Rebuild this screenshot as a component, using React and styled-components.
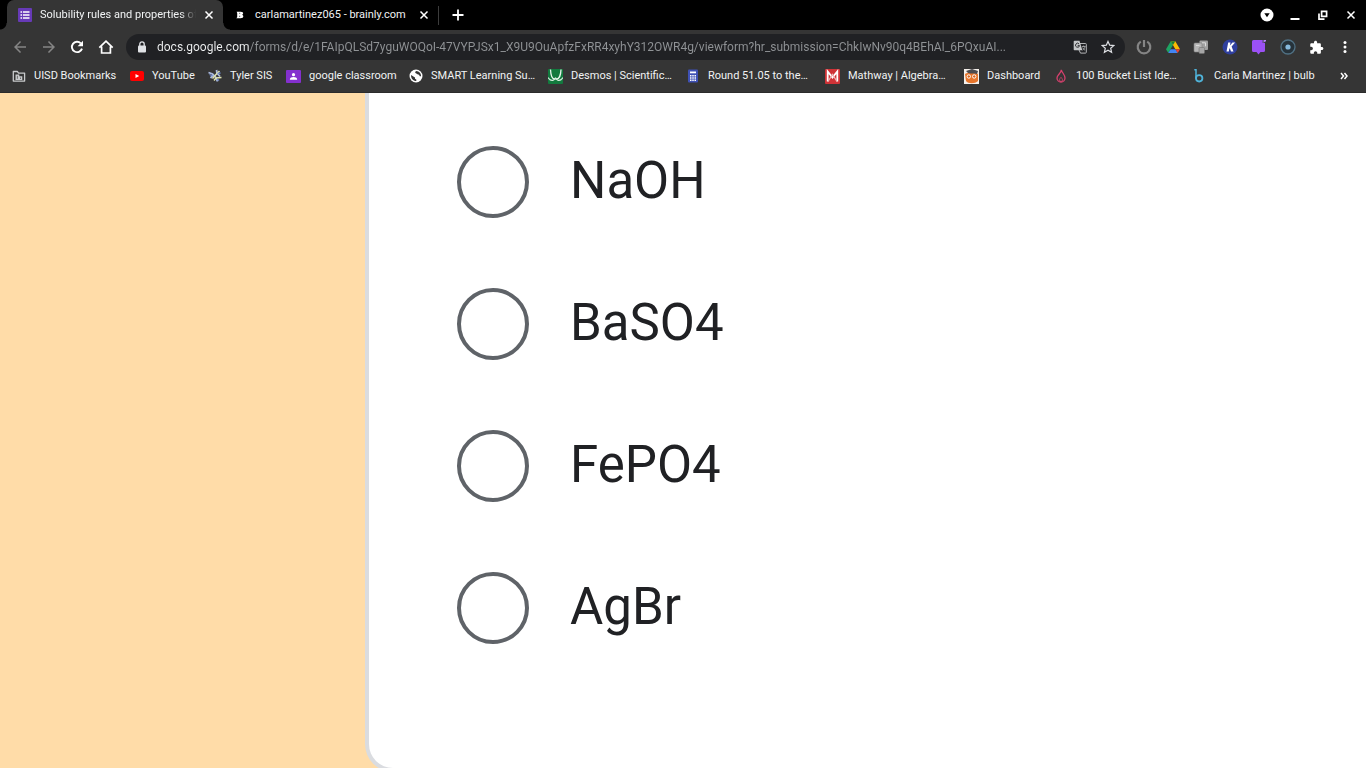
import React, { useState } from 'react';
import styled, { createGlobalStyle } from 'styled-components';

const GlobalStyle = createGlobalStyle`
  * {
    box-sizing: border-box;
  }

  body {
    margin: 0;
    font-family: Roboto, "Liberation Sans", sans-serif;
    background: #ffdca8;
    overflow: hidden;
  }
`

const Window = styled.div`
  display: flex;
  flex-direction: column;
  height: 100vh;
`

const TabStrip = styled.header`
  display: flex;
  align-items: center;
  height: 30px;
  padding: 0 1px 0 7px;
  background: #000;
`

const Tab = styled.div`
  position: relative;
  display: flex;
  align-items: center;
  width: ${props => props.$active ? 216 : 215}px;
  height: 30px;
  padding: 0 8px 0 ${props => props.$active ? 10 : 9}px;
  gap: 7px;
  border-radius: 7px 7px 0 0;
  background: ${props => props.$active ? '#353535' : '#000'};

  &::before, &::after {
    content: '';
    display: ${props => props.$active ? 'block' : 'none'};
    position: absolute;
    bottom: 0;
    width: 7px;
    height: 7px;
  }

  &::before {
    left: -7px;
    background: radial-gradient(circle at 0 0, #000 6px, #353535 7px);
  }

  &::after {
    right: -7px;
    z-index: 1;
    background: radial-gradient(circle at 100% 0, #000 6px, #353535 7px);
  }
`

const Favicon = styled.span`
  display: flex;
  flex: none;
  align-items: center;
  justify-content: center;
  width: 16px;
`

const TabTitle = styled.span`
  flex: 1;
  min-width: 0;
  white-space: nowrap;
  font-size: 11px;
  line-height: 16px;
  color: #f1f3f4;
  ${props => props.$fade && 'mask-image: linear-gradient(to right, #000 90%, transparent);'}
`

const IconButton = styled.button`
  display: flex;
  flex: none;
  align-items: center;
  justify-content: center;
  width: ${props => props.$width || 28}px;
  height: 24px;
  padding: 0;
  border: 0;
  background: none;
  color: ${props => props.$dim ? '#858585' : '#fff'};
`

const Separator = styled.span`
  width: 1px;
  height: 19px;
  background: #3c3c3c;
`

const WindowControls = styled.div`
  display: flex;
  margin-left: auto;
`

const Toolbar = styled.div`
  display: flex;
  align-items: center;
  height: 34px;
  padding: 0 7px 0 6px;
  background: #353535;
`

const ButtonGroup = styled.div`
  display: flex;
  flex: none;
  justify-content: space-between;
  width: ${props => props.$width}px;
`

const Omnibox = styled.div`
  display: flex;
  flex: 1;
  align-items: center;
  min-width: 0;
  height: 26px;
  margin: 0 5px 0 6px;
  padding: 0 3px 0 9px;
  border-radius: 13px;
  background: #202124;
`

// The host is brighter than the path, so the text is filled from a two-step gradient.
const Address = styled.input`
  flex: 1;
  min-width: 0;
  margin: 0 8px;
  padding: 0;
  border: 0;
  outline: 0;
  font-family: inherit;
  font-size: 12px;
  line-height: 18px;
  text-overflow: ellipsis;
  background: linear-gradient(to right, #f1f3f4 92px, #909396 92px);
  background-clip: text;
  -webkit-text-fill-color: transparent;
`

const Bookmarks = styled.nav`
  display: flex;
  align-items: center;
  height: 29px;
  padding: 0 14px 4px 12px;
  border-bottom: 1px solid #2b2b2b;
  background: #353535;
`

const Bookmark = styled.a`
  display: flex;
  flex: none;
  align-items: center;
  gap: 8px;
  width: ${props => props.$width}px;
  font-size: 11px;
  line-height: 16px;
  white-space: nowrap;
  text-decoration: none;
  color: #f1f3f4;
`

const More = styled(IconButton)`
  margin-left: auto;
`

const Page = styled.main`
  display: grid;
  flex: 1;
  grid-template-columns: 365px 1fr;
  min-height: 0;
`

const Card = styled.form`
  grid-column: 2;
  height: calc(100% + 4px);
  padding: 53px 88px;
  border: 4px solid #dadce0;
  border-width: 0 0 4px 4px;
  border-radius: 0 0 0 28px;
  background: #fff;
`

const Options = styled.fieldset`
  display: flex;
  flex-direction: column;
  gap: 70px;
  margin: 0;
  padding: 0;
  border: 0;
`

const Option = styled.label`
  display: flex;
  align-items: center;
  gap: 41px;
  height: 72px;
  font-size: 51px;
  line-height: 68px;
  color: #202124;
`

const Radio = styled.input`
  appearance: none;
  flex: none;
  width: 72px;
  height: 72px;
  margin: 0;
  border: 4px solid #5f6368;
  border-radius: 50%;

  &:checked {
    background: radial-gradient(circle, #673ab7 18px, transparent 19px);
    border-color: #673ab7;
  }
`

const OptionText = styled.span`
  padding-bottom: 2px;
`

const Svg = ({ size = 16, box = 16, children }) => (
  <svg width={size} height={size} viewBox={`0 0 ${box} ${box}`} fill="none" aria-hidden="true">
    {children}
  </svg>
)

const CloseIcon = () => (
  <Svg size={10} box={10}>
    <path d="M1.500 1.500l7 7M8.500 1.500l-7 7" stroke="currentColor" strokeWidth="1.500" />
  </Svg>
)

const FormsIcon = () => (
  <Svg size={14} box={14}>
    <rect width="14" height="14" rx="1" fill="#673ab7" />
    <path d="M5 4h6.500M5 7h6.500M5 10h6.500" stroke="#fff" strokeWidth="1.600" />
    <path d="M2.500 4h1.600M2.500 7h1.600M2.500 10h1.600" stroke="#fff" strokeWidth="1.600" />
  </Svg>
)

const BrainlyIcon = () => (
  <Svg size={8} box={8}>
    <path d="M.6.8h4.200c2.800 0 2.900 2.200 1.400 2.900C8.100 4.500 7.600 7.300 4.600 7.300H.3l.9-1.100V2.100z" fill="#fff" />
    <path d="M3.200 2.300h1M3.100 5.300h1.100" stroke="#333" strokeWidth=".9" />
  </Svg>
)

const BackIcon = () => (
  <Svg box={24} size={18}>
    <path fill="currentColor" d="M20 11H7.830l5.590-5.590L12 4l-8 8 8 8 1.410-1.410L7.830 13H20v-2z" />
  </Svg>
)

const ForwardIcon = () => (
  <Svg box={24} size={18}>
    <path fill="currentColor" d="M12 4l-1.410 1.410L16.170 11H4v2h12.170l-5.580 5.590L12 20l8-8z" />
  </Svg>
)

const ReloadIcon = () => (
  <Svg>
    <path d="M13 9.600A5.200 5.200 0 1 1 11.800 4.300" stroke="currentColor" strokeWidth="1.900" />
    <path d="M14 1.800v5.400H8.600z" fill="currentColor" />
  </Svg>
)

const HomeIcon = () => (
  <Svg>
    <path d="M1.300 8.600L8 2.200l6.700 6.400M3.600 7.500V14h8.800V7.500" stroke="currentColor" strokeWidth="1.700" />
  </Svg>
)

const LockIcon = () => (
  <Svg size={14} box={14}>
    <rect x="3" y="5.500" width="8" height="7" rx="1" fill="#dfe1e5" />
    <path d="M4.800 6V4a2.200 2.200 0 0 1 4.400 0v2" stroke="#dfe1e5" strokeWidth="1.300" />
  </Svg>
)

const TranslateIcon = () => (
  <Svg size={14} box={14}>
    <path d="M6 3.500h6.500a.8.8 0 0 1 .8.800v8a.8.8 0 0 1-.8.800H7.500L6 10" stroke="#b4b6b8" strokeWidth="1" />
    <path d="M1.500.7h5l2.800 9.600H1.500a.8.8 0 0 1-.8-.8v-8a.8.8 0 0 1 .8-.8z" fill="#c4c6c8" />
    <path d="M6 3.900a2 2 0 1 0 .5 1.700H4.700" stroke="#303134" strokeWidth="1" />
    <path d="M8.900 6.500h3.600M10.700 5.500v1M12 6.500c-.3 1.700-1.300 2.900-2.400 3.700M9.700 7.600c.5 1.200 1.400 2.100 2.400 2.700" stroke="#b4b6b8" strokeWidth=".8" />
  </Svg>
)

const StarIcon = () => (
  <Svg size={14} box={14}>
    <path d="M7 1.400l1.700 3.800 4.100.4-3.100 2.700.9 4L7 10.200l-3.600 2.100.9-4-3.100-2.700 4.100-.4z" stroke="#dfe1e5" strokeWidth="1.200" />
  </Svg>
)

const PowerIcon = () => (
  <Svg>
    <path d="M4.800 2.600a6.300 6.300 0 1 0 6.400 0" stroke="#858585" strokeWidth="2.200" />
    <path d="M8 1v7" stroke="#858585" strokeWidth="2.200" />
  </Svg>
)

const DriveIcon = () => (
  <Svg size={14} box={14}>
    <path d="M4.700 1.200L7 5.100 2.300 13 0 9.200z" fill="#1ea362" />
    <path d="M4.700 1.200h4.600L14 9.200H9.400z" fill="#fbbc04" />
    <path d="M4.600 9.200h4.800L11.700 13H2.300z" fill="#4285f4" />
    <path d="M9.400 9.200H14L11.700 13z" fill="#ea4335" />
    <path d="M4.700 1.200h4.600L7 5.100z" fill="#188038" />
  </Svg>
)

const CopiesIcon = () => (
  <Svg>
    <rect x="6.500" y="1.500" width="8.500" height="9.500" rx="1" fill="#a0a0a0" />
    <rect x="1" y="4" width="8" height="9" rx="1" fill="#b6b6b6" stroke="#808080" strokeWidth=".6" />
    <rect x="6" y="8.500" width="5.500" height="6" rx="1" fill="#a5a5a5" stroke="#6f6f6f" strokeWidth=".6" />
    <path d="M9 3.800h3.500v3.500M3 6.500h3.500" stroke="#dadada" />
  </Svg>
)

const KamiIcon = () => (
  <Svg>
    <circle cx="8" cy="8" r="7.500" fill="#2f3f9e" />
    <path d="M6.200 3.600h2.300l-.6 3 2.600-3h2.600L9.600 7.500l1.900 4.900H9L7.800 9.300l-.5.500-.5 2.600H4.500z" fill="#fff" />
  </Svg>
)

const PurpleIcon = () => (
  <Svg>
    <path d="M2.500 1h9.200v3H14v7.500a1.500 1.500 0 0 1-1.500 1.500H9.500L7.500 15.500l-2-2.500h-3A1.500 1.500 0 0 1 1 11.500v-9A1.500 1.500 0 0 1 2.500 1z" fill="#9b51f5" />
    <path d="M12.500 1H15v1.500h-1L12.500 4z" fill="#b784fb" />
  </Svg>
)

const TargetIcon = () => (
  <Svg>
    <circle cx="8" cy="8" r="7" stroke="#507184" strokeWidth="1.300" fill="#26323a" />
    <circle cx="8" cy="8" r="2.600" fill="#86b9dc" />
  </Svg>
)

const PuzzleIcon = () => (
  <Svg box={24} size={15}>
    <path fill="currentColor" d="M20.500 11H19V7c0-1.100-.9-2-2-2h-4V3.500C13 2.120 11.880 1 10.500 1S8 2.120 8 3.500V5H4c-1.100 0-1.990.9-1.990 2v3.800H3.500c1.490 0 2.700 1.210 2.700 2.700s-1.210 2.700-2.700 2.700H2V20c0 1.100.9 2 2 2h3.800v-1.500c0-1.490 1.210-2.700 2.700-2.700 1.490 0 2.700 1.210 2.700 2.700V22H17c1.100 0 2-.9 2-2v-4h1.500c1.380 0 2.500-1.120 2.500-2.500S21.880 11 20.500 11z" />
  </Svg>
)

const DotsIcon = () => (
  <Svg>
    <circle cx="8" cy="3.500" r="1.500" fill="currentColor" />
    <circle cx="8" cy="8" r="1.500" fill="currentColor" />
    <circle cx="8" cy="12.500" r="1.500" fill="currentColor" />
  </Svg>
)

const FolderIcon = () => (
  <Svg size={14} box={14}>
    <path d="M1.300 2.500h4l1.300 1.600h6v8H1.300z" stroke="#c8cacc" strokeWidth="1.300" strokeLinejoin="round" />
    <path d="M3.500 5.500h3.800v1.800h3V11H3.500z" fill="#c8cacc" />
    <path d="M5.400 6.800v3M8.500 8.500V10" stroke="#555" strokeWidth=".8" />
  </Svg>
)

const YoutubeIcon = () => (
  <Svg size={14} box={14}>
    <rect y="2" width="14" height="10" rx="2" fill="#f00" />
    <path d="M5.500 4.900v4.200L9.200 7z" fill="#fff" />
  </Svg>
)

const TylerIcon = () => (
  <Svg size={14} box={14}>
    <path d="M.5 3.500l4 1.500 3 3 2 4.500M2.500 9l3-3M8.500 1l.5 3 3 3.500" stroke="#aab9de" strokeWidth="1.800" />
    <path d="M4.500 9.500L8 5.500 11.500 2M6 11.500l2-2.500 5.500-.5" stroke="#dfe3b0" strokeWidth="1.500" />
    <path d="M1.500 5.500l3 1.500M9.500 4.500l3-.5M9 10l2 1.500" stroke="#6f8acb" strokeWidth="1.300" />
  </Svg>
)

const ClassroomIcon = () => (
  <Svg size={15} box={15}>
    <rect width="15" height="13" y="1" rx="1" fill="#8430ce" />
    <circle cx="7.500" cy="5.700" r="1.600" fill="#fff" />
    <path d="M3.900 10.200c0-3 7.200-3 7.200 0v.5H3.900z" fill="#fff" />
  </Svg>
)

const GlobeIcon = () => (
  <Svg size={14} box={14}>
    <circle cx="7" cy="7" r="6.500" fill="#fff" />
    <path d="M2 6l4 2.500v1.300l1.300.8v1.500C4 12 2 9.500 2 6zM7.500 2c-1.500.3-1.700 1.600-.7 2.200 1.600.6 1.800 1.500 3.200 1.500l.8 1.600h1.300C12 4 10 2.300 7.500 2z" fill="#353535" />
  </Svg>
)

const DesmosIcon = () => (
  <Svg size={15} box={15}>
    <rect width="15" height="15" rx="1" fill="#127a3e" />
    <path d="M2.500.5c.3 6 2 9.500 4 9.500 1 0 1-1.500 1-1.500s.2 1.500 1.300 1.500c2.200 0 4-4 4.200-9.500" stroke="#e7f5ec" strokeWidth="1.300" />
    <path d="M0 8.500c2 3 3.500 3.700 5.500 2.500l2-1.500 2 1.500c2 1.200 3.500.5 5.500-2.500" stroke="#d3ecdc" strokeWidth="1.200" />
  </Svg>
)

const CalculatorIcon = () => (
  <Svg size={14} box={14}>
    <rect x="2" y=".5" width="10" height="13" rx="1" fill="#3f51b5" />
    <path d="M4 3.400h6" stroke="#fff" strokeWidth="1.800" />
    <path d="M4 6.700h6M4 9h6M4 11.300h6" stroke="#fff" strokeWidth="1.400" strokeDasharray="1.500 .75" />
  </Svg>
)

const MathwayIcon = () => (
  <Svg size={15} box={15}>
    <rect width="15" height="15" rx="1" fill="#cf3337" />
    <path d="M2.700 12.500v-10l4.800 6 4.800-6v10" stroke="#fff" strokeWidth="1.800" />
    <path d="M3 12.500l4.500-7 4.500 7" stroke="#f0b4b5" strokeWidth="1.300" />
  </Svg>
)

const OwlIcon = () => (
  <Svg size={15} box={15}>
    <rect width="15" height="15" fill="#f6f1ec" />
    <path d="M1 5c3-2 10-2 13 0v7c-3 3-10 3-12 0z" fill="#e8762c" />
    <path d="M2 2l6-2 6 2-1 3c-3-1-6 0-9-1z" fill="#4c4c50" />
    <circle cx="4.800" cy="7.500" r="1.700" stroke="#fff" fill="#d9641c" />
    <circle cx="10.200" cy="7.500" r="1.700" stroke="#fff" fill="#d9641c" />
  </Svg>
)

const FlameIcon = () => (
  <Svg size={14} box={14}>
    <path d="M7.300.8c.7 3 3.700 4.800 3.700 8.200a4 4 0 0 1-8 0c0-2 1.500-3 2.300-4.200C6.500 3.500 7.300 2.500 7.300.8z" stroke="#d6406d" strokeWidth="1.300" />
    <path d="M7 8.300c-1 1.200-1.500 1.700-1.500 2.700a1.500 1.500 0 0 0 3 0c0-1-.6-1.500-1.500-2.700z" stroke="#d6406d" strokeWidth=".8" />
  </Svg>
)

const BulbIcon = () => (
  <Svg size={14} box={14}>
    <path d="M2.300.8h1.700v9" stroke="#4fb3d9" strokeWidth="1.500" />
    <circle cx="7.200" cy="9.300" r="3.200" stroke="#4fb3d9" strokeWidth="1.800" />
  </Svg>
)

const bookmarks = [
  { label: 'UISD Bookmarks', icon: <FolderIcon />, width: 118 },
  { label: 'YouTube', icon: <YoutubeIcon />, width: 78 },
  { label: 'Tyler SIS', icon: <TylerIcon />, width: 78 },
  { label: 'google classroom', icon: <ClassroomIcon />, width: 123 },
  { label: 'SMART Learning Su…', icon: <GlobeIcon />, width: 139 },
  { label: 'Desmos | Scientific…', icon: <DesmosIcon />, width: 138 },
  { label: 'Round 51.05 to the…', icon: <CalculatorIcon />, width: 139 },
  { label: 'Mathway | Algebra…', icon: <MathwayIcon />, width: 139 },
  { label: 'Dashboard', icon: <OwlIcon />, width: 90 },
  { label: '100 Bucket List Ide…', icon: <FlameIcon />, width: 138 },
  { label: 'Carla Martinez | bulb', icon: <BulbIcon />, width: 124 }
]

const extensions = [
  { label: 'Power', icon: <PowerIcon /> },
  { label: 'Drive', icon: <DriveIcon /> },
  { label: 'Copies', icon: <CopiesIcon /> },
  { label: 'Kami', icon: <KamiIcon /> },
  { label: 'Notes', icon: <PurpleIcon /> },
  { label: 'Recorder', icon: <TargetIcon /> },
  { label: 'Extensions', icon: <PuzzleIcon /> },
  { label: 'Menu', icon: <DotsIcon /> }
]

const answers = ['NaOH', 'BaSO4', 'FePO4', 'AgBr']

const url = 'docs.google.com/forms/d/e/1FAIpQLSd7yguWOQoI-47VYPJSx1_X9U9OuApfzFxRR4xyhY312OWR4g/viewform?hr_submission=ChkIwNv90q4BEhAI_6PQxuAI...'

const Tabs = () => (
  <TabStrip>
    <Tab $active>
      <Favicon><FormsIcon /></Favicon>
      <TabTitle $fade>Solubility rules and properties of</TabTitle>
      <IconButton $width={12} aria-label="Close tab"><CloseIcon /></IconButton>
    </Tab>
    <Tab>
      <Favicon><BrainlyIcon /></Favicon>
      <TabTitle>carlamartinez065 - brainly.com</TabTitle>
      <IconButton $width={12} aria-label="Close tab"><CloseIcon /></IconButton>
    </Tab>
    <Separator />
    <IconButton $width={38} aria-label="New tab">
      <Svg size={12} box={12}>
        <path d="M6 .5v11M.5 6h11" stroke="currentColor" strokeWidth="1.800" />
      </Svg>
    </IconButton>
    <WindowControls>
      <IconButton aria-label="Search tabs">
        <Svg size={14} box={14}>
          <circle cx="7" cy="7" r="6.500" fill="currentColor" />
          <path d="M4.300 5.300h5.400L7 9.300z" fill="#000" />
        </Svg>
      </IconButton>
      <IconButton aria-label="Minimize">
        <Svg size={10} box={10}><path d="M.5 9h9" stroke="currentColor" strokeWidth="2" /></Svg>
      </IconButton>
      <IconButton aria-label="Restore">
        <Svg size={10} box={10}>
          <path d="M3.600 1.400h5v5h-5zM1 3.500v5.700h5.500" stroke="currentColor" strokeWidth="1.700" />
        </Svg>
      </IconButton>
      <IconButton aria-label="Close"><CloseIcon /></IconButton>
    </WindowControls>
  </TabStrip>
)

const App = () => {
  const [address, setAddress] = useState(url)
  const [answer, setAnswer] = useState('')

  return (
    <Window>
      <GlobalStyle />
      <Tabs />
      <Toolbar>
        <ButtonGroup $width={114}>
          <IconButton $dim aria-label="Back"><BackIcon /></IconButton>
          <IconButton $dim aria-label="Forward"><ForwardIcon /></IconButton>
          <IconButton aria-label="Reload"><ReloadIcon /></IconButton>
          <IconButton aria-label="Home"><HomeIcon /></IconButton>
        </ButtonGroup>
        <Omnibox>
          <LockIcon />
          <Address aria-label="Address" value={address} onChange={e => setAddress(e.target.value)} />
          <IconButton aria-label="Translate"><TranslateIcon /></IconButton>
          <IconButton aria-label="Bookmark this tab"><StarIcon /></IconButton>
        </Omnibox>
        <ButtonGroup $width={229}>
          {extensions.map(item => (
            <IconButton key={item.label} aria-label={item.label}>{item.icon}</IconButton>
          ))}
        </ButtonGroup>
      </Toolbar>
      <Bookmarks>
        {bookmarks.map(item => (
          <Bookmark key={item.label} href="#" $width={item.width}>
            {item.icon}
            <span>{item.label}</span>
          </Bookmark>
        ))}
        <More $width={16} aria-label="More bookmarks">
          <Svg size={8} box={8}>
            <path d="M1 1l2.500 3L1 7M4.500 1L7 4 4.500 7" stroke="currentColor" strokeWidth="1.500" />
          </Svg>
        </More>
      </Bookmarks>
      <Page>
        <Card>
          <Options>
            {answers.map(name => (
              <Option key={name}>
                <Radio type="radio" name="answer" value={name} checked={answer === name} onChange={() => setAnswer(name)} />
                <OptionText>{name}</OptionText>
              </Option>
            ))}
          </Options>
        </Card>
      </Page>
    </Window>
  )
}

export default App;
